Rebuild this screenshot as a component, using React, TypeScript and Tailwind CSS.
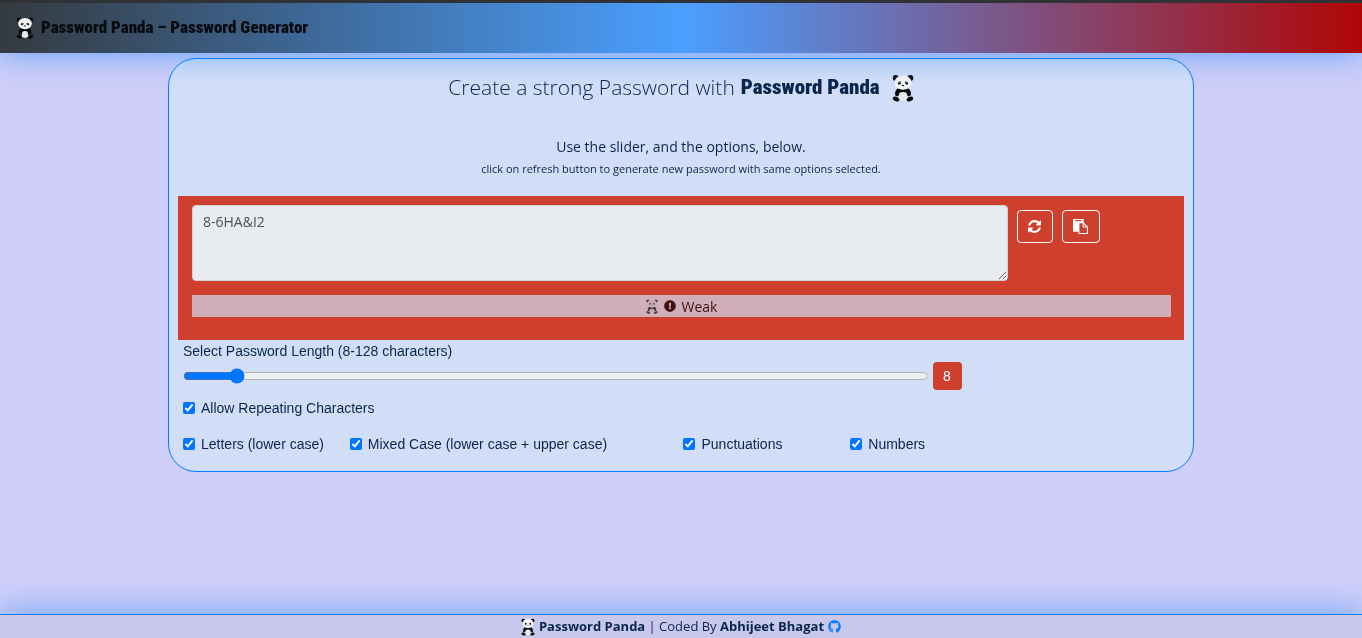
import { useState } from "react";
import { FaExclamationCircle, FaGithub } from "react-icons/fa";

const REFRESH_PATH =
  "M1511 928q0 5-1 7-64 268-268 434.500t-478 166.500q-146 0-282.500-55t-243.500-157l-129 129q-19 19-45 19t-45-19-19-45v-448q0-26 19-45t45-19h448q26 0 45 19t19 45-19 45l-137 137q71 66 161 102t187 36q134 0 250-65t186-179q11-17 53-117 8-23 30-23h192q13 0 22.500 9.500t9.500 22.500zm25-800v448q0 26-19 45t-45 19h-448q-26 0-45-19t-19-45 19-45l138-138q-148-137-349-137-134 0-250 65t-186 179q-11 17-53 117-8 23-30 23h-199q-13 0-22.500-9.500t-9.500-22.500v-7q65-268 270-434.500t480-166.500q146 0 284 55.500t245 156.500l130-129q19-19 45-19t45 19 19 45z";

const PASTE_PATH =
  "M768 1664h896v-640h-416q-40 0-68-28t-28-68v-416h-384v1152zm256-1440v-64q0-13-9.500-22.500t-22.500-9.500h-704q-13 0-22.500 9.500t-9.500 22.500v64q0 13 9.500 22.500t22.500 9.500h704q13 0 22.500-9.500t9.500-22.500zm256 672h299l-299-299v299zm512 128v672q0 40-28 68t-68 28h-960q-40 0-68-28t-28-68v-160h-544q-40 0-68-28t-28-68v-1344q0-40 28-68t68-28h1088q40 0 68 28t28 68v328q21 13 36 28l408 408q28 28 48 76t20 88z";

function Panda({ className }: { className: string }) {
  return (
    <svg viewBox="0 0 24 30" className={className} aria-hidden="true">
      <g fill="#0b0b0d">
        <circle cx="4" cy="4" r="3.2" />
        <circle cx="20" cy="4" r="3.2" />
        <path d="M6 15.500Q12 18 18 15.500Q21.500 19 20.500 22.500Q19.500 25 17 23.500L15.500 20.500H8.500L7 23.500Q4.500 25 3.500 22.500Q2.500 19 6 15.500Z" />
        <ellipse cx="4.500" cy="27" rx="3.800" ry="2.400" transform="rotate(22 4.500 27)" />
        <ellipse cx="19.500" cy="27" rx="3.800" ry="2.400" transform="rotate(-22 19.500 27)" />
      </g>
      <path d="M8.500 20Q12 18.500 15.500 20L16.500 27Q12 30 7.500 27Z" fill="#e9eaee" />
      <ellipse cx="12" cy="9" rx="9.300" ry="7.700" fill="#f5f5f5" />
      <g fill="#111">
        <ellipse cx="8.200" cy="9.500" rx="2" ry="1.500" transform="rotate(-40 8.200 9.500)" />
        <ellipse cx="15.800" cy="9.500" rx="2" ry="1.500" transform="rotate(40 15.800 9.500)" />
        <ellipse cx="12" cy="12.200" rx="1.200" ry="0.800" />
      </g>
      <g fill="#fff">
        <circle cx="8.700" cy="9" r="0.600" />
        <circle cx="15.300" cy="9" r="0.600" />
      </g>
    </svg>
  );
}

function Option({ label, className = "" }: { label: string; className?: string }) {
  return (
    <label className={`flex items-center gap-1.5 ${className}`}>
      <input type="checkbox" defaultChecked className="size-3 accent-[#0075ff]" />
      {label}
    </label>
  );
}

export default function App() {
  const [length, setLength] = useState(8);

  return (
    <div className="flex min-h-screen flex-col bg-[#cecef8] font-['Open_Sans','Noto_Sans',sans-serif] text-[#09264a]">
      <header className="relative z-10 border-t-[3px] border-[#303236] shadow-[0_0_32px_#007bff90]">
        <div className="flex h-[50px] items-center gap-[7px] bg-linear-[90deg,#343a40,#4b9fff_50%,#b00606] px-4">
          <Panda className="h-[22px] w-[18px]" />
          <h1 className="font-['Roboto_Condensed','Open_Sans_Condensed',Lato,sans-serif] text-[17px] font-black text-[#070b10]">
            Password Panda – Password Generator
          </h1>
        </div>
      </header>

      <main className="grow px-[168px] pt-[5px]">
        <section className="rounded-[28px] border border-[#007bff] bg-[#d2def8] px-[9px] pb-[9px]">
          <h2 className="flex h-[58px] items-center justify-center gap-1.5 text-[21px] font-light">
            Create a strong Password with
            <strong className="font-['Roboto_Condensed','Open_Sans_Condensed',Lato,sans-serif] text-[21px] font-black">
              Password Panda
            </strong>
            <Panda className="ml-1.5 h-7 w-[22px]" />
          </h2>
          <div className="pt-[19px] pb-[17px] text-center">
            <p className="text-[14px] leading-[22px]">Use the slider, and the options, below.</p>
            <p className="text-[11px] leading-[21px]">
              click on refresh button to generate new password with same options selected.
            </p>
          </div>

          <div className="h-[144px] bg-[#ce402d] pt-[9px] pr-[13px] pl-3.5">
            <div className="flex items-start gap-[9px]">
              <textarea
                readOnly
                aria-label="Generated password"
                value="8-6HA&I2"
                className="h-[76px] w-5/6 rounded border border-[#ced4da] bg-[#e9ecef] px-2.5 py-[5px] text-[14px] text-[#495057]"
              />
              <button
                type="button"
                aria-label="Refresh"
                className="mt-[5px] flex h-[33px] w-9 items-center justify-center rounded border border-white text-white"
              >
                <svg viewBox="0 0 1536 1536" className="size-[13px]" fill="currentColor">
                  <path d={REFRESH_PATH} />
                </svg>
              </button>
              <button
                type="button"
                aria-label="Copy"
                className="mt-[5px] flex h-[33px] w-[38px] items-center justify-center rounded border border-white text-white"
              >
                <svg viewBox="0 0 1792 1792" className="size-[15px]" fill="currentColor">
                  <path d={PASTE_PATH} />
                </svg>
              </button>
            </div>
            <div className="mt-3.5 flex h-[22px] items-center justify-center gap-1.5 bg-[#d0afba] text-[14px] text-[#44120f]">
              <Panda className="h-[15px] w-3 opacity-70 mix-blend-multiply" />
              <FaExclamationCircle className="size-3" />
              <span>Weak</span>
            </div>
          </div>

          <div className="pl-[5px] font-['Liberation_Sans',sans-serif] text-[14px]">
            <label htmlFor="length" className="block h-[22px] leading-[22px]">
              Select Password Length (8-128 characters)
            </label>
            <div className="flex items-center gap-1 pr-[7px]">
              <input
                id="length"
                type="range"
                min={0}
                max={128}
                value={length}
                onChange={(e) => setLength(Math.max(8, Number(e.target.value)))}
                className="w-3/4 accent-[#0075ff]"
              />
              <output
                htmlFor="length"
                className="flex h-7 w-[29px] items-center justify-center rounded bg-[#ce402d] text-white"
              >
                {length}
              </output>
            </div>
            <div className="flex h-9 items-center">
              <Option label="Allow Repeating Characters" />
            </div>
            <div className="flex h-9 items-center">
              <Option label="Letters (lower case)" className="w-1/6" />
              <Option label="Mixed Case (lower case + upper case)" className="w-1/3" />
              <Option label="Punctuations" className="w-1/6" />
              <Option label="Numbers" />
            </div>
          </div>
        </section>
      </main>

      <footer className="flex h-6 items-center justify-center gap-1 border-t border-[#007bff] bg-[#c8c8ef] text-[13px] shadow-[0_0_32px_#007bff90]">
        <Panda className="h-[18px] w-3.5" />
        <p>
          <strong>Password Panda</strong> | Coded By <strong>Abhijeet Bhagat</strong>
        </p>
        <a href="#github" aria-label="GitHub" className="text-[#007bff]">
          <FaGithub className="size-[13px]" />
        </a>
      </footer>
    </div>
  );
}
